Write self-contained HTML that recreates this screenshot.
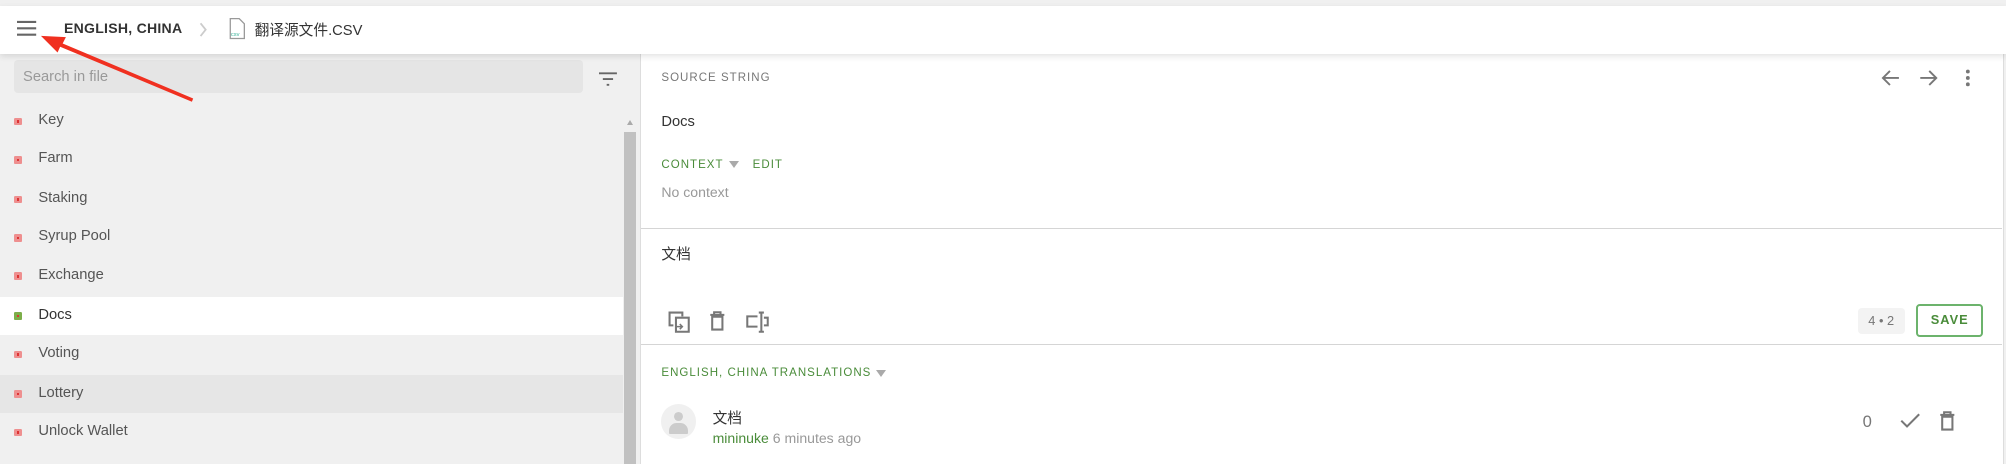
<!DOCTYPE html>
<html><head><meta charset="utf-8"><style>
html,body{margin:0;padding:0;width:2006px;height:464px;overflow:hidden;background:#f0f0f0}
#w{zoom:1.2793;width:1568px;height:363px;position:relative;font-family:"Liberation Sans","Noto Sans CJK SC",sans-serif;overflow:hidden;background:#f0f0f0}
.a{position:absolute;white-space:nowrap}
.hdr{left:0;top:5px;width:1568px;height:37px;background:#fff;box-shadow:0 2px 5px rgba(0,0,0,.12);z-index:3}
.left{left:0;top:42px;width:497px;height:321px;background:#f0f0f0}
.right{left:500px;top:42px;width:1065px;height:321px;background:#fff;border-left:1px solid #ddd;border-right:1px solid #ddd}
.it{left:0;width:487px;height:30px;font-size:11.5px;color:#555;line-height:30px}
.it i{position:absolute;left:11px;top:12px;width:6px;height:6px;background:#ee8f8f;border-radius:1px}
.it i:after{content:"";position:absolute;left:2px;top:2px;width:2px;height:2px;background:#d33}
.it span{position:absolute;left:30px;top:-1px}
.lab{font-size:9px;letter-spacing:.8px}
.g{color:#4a8c3a}
.tri{display:inline-block;width:0;height:0;border-left:4px solid transparent;border-right:4px solid transparent;border-top:6px solid #aaa;margin-left:4px;vertical-align:middle}
</style></head><body><div id="w">
<div class="a hdr">
  <svg class="a" style="left:13px;top:11px" width="16" height="13" viewBox="0 0 16 13"><path d="M0 1.5h15M0 6.5h15M0 11.5h15" stroke="#666" stroke-width="1.6"/></svg>
  <div class="a" style="left:50px;top:11px;font-size:11px;font-weight:bold;color:#333;letter-spacing:.2px">ENGLISH, CHINA</div>
  <svg class="a" style="left:155px;top:12px" width="8" height="12"><path d="M2 1l4 5-4 5" fill="none" stroke="#ccc" stroke-width="1.4"/></svg>
  <svg class="a" style="left:179px;top:9px" width="13" height="17" viewBox="0 0 13 17"><path d="M1 .5h7l4 4v11.5H1z" fill="#fff" stroke="#999"/><text x="1.5" y="14" font-size="4.5" fill="#3bb39a" font-family="Liberation Sans">csv</text></svg>
  <div class="a" style="left:199px;top:10px;font-size:11.5px;color:#333">翻译源文件.CSV</div>
</div>
<div class="a left">
  <div class="a" style="left:11px;top:5px;width:445px;height:26px;background:#e5e5e5;border-radius:3px"></div>
  <div class="a" style="left:18px;top:12px;font-size:11.5px;color:#999">Search in file</div>
  <svg class="a" style="left:468px;top:14px" width="15" height="12"><path d="M0 1h14M3 5.5h8M6 10h2" stroke="#666" stroke-width="1.5"/></svg>
  <div class="a" style="left:488px;top:48px;width:9px;height:273px;background:#f0f0f0"></div>
  <div class="a" style="left:490px;top:52px;width:0;height:0;border-left:3px solid transparent;border-right:3px solid transparent;border-bottom:4px solid #aaa"></div>
  <div class="a" style="left:488px;top:61px;width:9px;height:260px;background:#c1c1c1"></div>
</div>
<div class="a it" style="top:80px"><i></i><span>Key</span></div>
<div class="a it" style="top:110px"><i></i><span>Farm</span></div>
<div class="a it" style="top:141px"><i></i><span>Staking</span></div>
<div class="a it" style="top:171px"><i></i><span>Syrup Pool</span></div>
<div class="a it" style="top:201px"><i></i><span>Exchange</span></div>
<div class="a it" style="top:232px;background:#fff;color:#333"><i style="background:#7cae4a"></i><span>Docs</span></div>
<div class="a it" style="top:262px"><i></i><span>Voting</span></div>
<div class="a it" style="top:293px;background:#e6e6e6"><i></i><span>Lottery</span></div>
<div class="a it" style="top:323px"><i></i><span>Unlock Wallet</span></div>
<div class="a right"></div>
<div class="a lab" style="left:517px;top:56px;color:#777">SOURCE STRING</div>
<svg class="a" style="left:1470px;top:54px" width="15" height="14"><path d="M14 7H2M7 1.5L1.5 7 7 12.5" fill="none" stroke="#777" stroke-width="1.5"/></svg>
<svg class="a" style="left:1500px;top:54px" width="15" height="14"><path d="M1 7h12M8 1.5L13.5 7 8 12.5" fill="none" stroke="#777" stroke-width="1.5"/></svg>
<svg class="a" style="left:1535px;top:54px" width="6" height="14"><circle cx="3" cy="2" r="1.5" fill="#777"/><circle cx="3" cy="7" r="1.5" fill="#777"/><circle cx="3" cy="12" r="1.5" fill="#777"/></svg>
<div class="a" style="left:517px;top:89px;font-size:11.5px;color:#333">Docs</div>
<div class="a lab g" style="left:517px;top:124px">CONTEXT<span class="tri"></span><span style="margin-left:11px">EDIT</span></div>
<div class="a" style="left:517px;top:144px;font-size:11px;color:#999">No context</div>
<div class="a" style="left:501px;top:178px;width:1064px;height:1px;background:#d5d5d5"></div>
<div class="a" style="left:517px;top:190px;font-size:11.5px;color:#333">文档</div>
<svg class="a" style="left:521px;top:242px" width="19" height="19" viewBox="0 0 19 19"><path d="M5 12H2V2h10v3M7 6h10v11H7z" fill="none" stroke="#777" stroke-width="1.6"/><path d="M7 13h5M10 11l2 2-2 2" fill="none" stroke="#777" stroke-width="1.2"/></svg>
<svg class="a" style="left:554px;top:243px" width="13" height="16" viewBox="0 0 13 16"><path d="M1 3h11M4 3V1h5v2M2.5 4.5h8v10h-8z" fill="none" stroke="#777" stroke-width="1.6"/></svg>
<svg class="a" style="left:583px;top:242px" width="18" height="19" viewBox="0 0 18 19"><path d="M9 5H1v8h8M12 2v15M10 2h4M10 17h4M14 6h3v6h-3" fill="none" stroke="#777" stroke-width="1.6"/></svg>
<div class="a" style="left:1452px;top:241px;width:37px;height:20px;background:#f3f3f3;border-radius:3px;font-size:10px;color:#777;text-align:center;line-height:20px">4 • 2</div>
<div class="a" style="left:1498px;top:238px;width:49px;height:22px;border:2px solid #6cb36c;border-radius:3px;font-size:10px;font-weight:bold;letter-spacing:.8px;color:#4a8c3a;text-align:center;line-height:22px">SAVE</div>
<div class="a" style="left:501px;top:269px;width:1064px;height:1px;background:#d5d5d5"></div>
<div class="a lab g" style="left:517px;top:287px">ENGLISH, CHINA TRANSLATIONS<span class="tri"></span></div>
<div class="a" style="left:517px;top:316px;width:27px;height:27px;border-radius:50%;background:#f0f0f0;overflow:hidden"><div class="a" style="left:10px;top:6px;width:7px;height:7px;border-radius:50%;background:#ccc"></div><div class="a" style="left:6px;top:15px;width:15px;height:8px;border-radius:6px 6px 1px 1px;background:#ccc"></div></div>
<div class="a" style="left:557px;top:318px;font-size:11.5px;color:#333">文档</div>
<div class="a" style="left:557px;top:336px;font-size:11px;color:#999"><span class="g">mininuke</span> 6 minutes ago</div>
<div class="a" style="left:1456px;top:322px;font-size:13px;color:#777">0</div>
<svg class="a" style="left:1485px;top:323px" width="16" height="12"><path d="M1 6l4.5 4.5L15 1" fill="none" stroke="#777" stroke-width="1.6"/></svg>
<svg class="a" style="left:1516px;top:321px" width="13" height="16" viewBox="0 0 13 16"><path d="M1 3h11M4 3V1h5v2M2.5 4.5h8v10h-8z" fill="none" stroke="#777" stroke-width="1.6"/></svg>
<svg class="a" style="left:0;top:0;z-index:5" width="200" height="100"><path d="M151 77L49 34l2.5-5L32 28l13 13 2-4.5L150 79.5z" fill="#f03020"/></svg>
</div></body></html>
